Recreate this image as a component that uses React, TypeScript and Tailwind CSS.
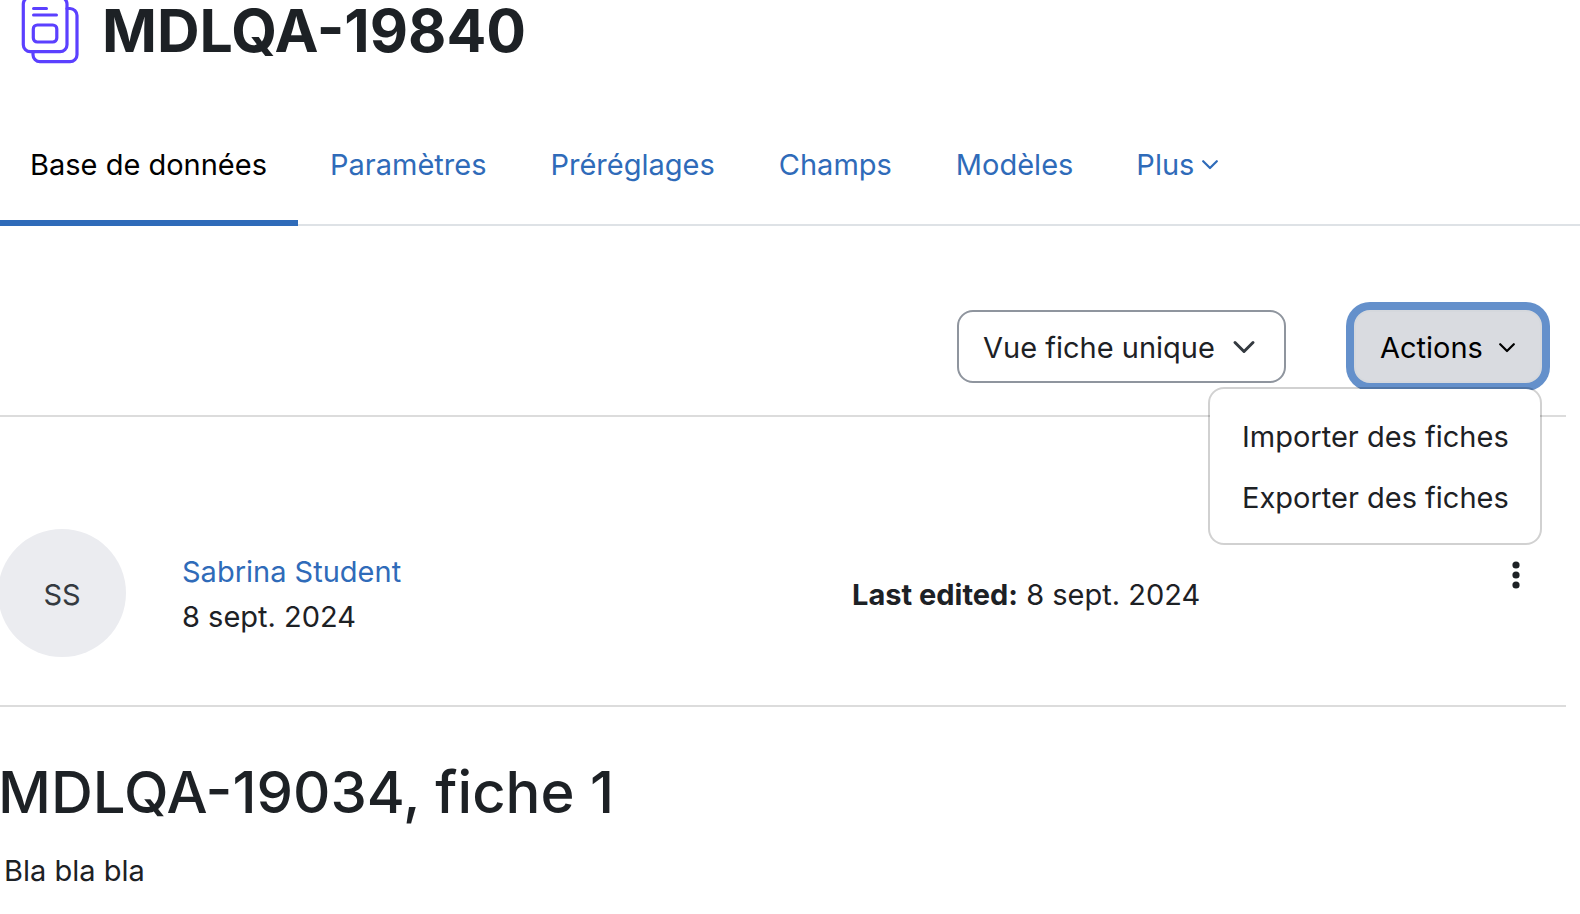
import React from 'react';

const tabs = ['Paramètres', 'Préréglages', 'Champs', 'Modèles'];

const menuItems = ['Importer des fiches', 'Exporter des fiches'];

const DatabaseIcon: React.FC = () => (
  <svg className="h-16 w-15 shrink-0" viewBox="0 0 60 64" fill="none" stroke="#5b40ff" strokeWidth="3.2" strokeLinecap="round" aria-hidden="true">
    <rect x="3.3" y="-3" width="43.7" height="54.7" rx="7" />
    <path d="M47 8.5h3a7 7 0 0 1 7 7v39.2a7 7 0 0 1-7 7H20a7 7 0 0 1-7-7v-3" />
    <path d="M13.5 8.5h13M13.5 15h23" strokeWidth="3" />
    <rect x="13.3" y="25" width="23.5" height="17" rx="4" />
  </svg>
);

const SmallChevron: React.FC = () => (
  <svg className="h-4 w-4 shrink-0" viewBox="0 0 16 16" fill="none" stroke="currentColor" strokeWidth="2.2" strokeLinecap="round" strokeLinejoin="round" aria-hidden="true">
    <path d="M1.2 4.2 8 11l6.8-6.8" />
  </svg>
);

const TabBar: React.FC = () => (
  <nav className="flex text-[29px] leading-[45px] text-[#2f6bb9] shadow-[inset_0_-2px_0_#dee2e6]">
    <a href="#base" aria-current="page" className="border-b-6 border-[#2f6bb9] pt-10 pr-[31px] pb-[33px] pl-[30px] text-black">
      Base de données
    </a>
    {tabs.map((tab) => (
      <a key={tab} href={`#${tab}`} className="px-8 pt-10 pb-[33px]">
        {tab}
      </a>
    ))}
    <button type="button" className="flex items-center gap-2 px-[31px] pt-10 pb-[39px]">
      Plus
      <SmallChevron />
    </button>
  </nav>
);

const Toolbar: React.FC = () => (
  <div className="flex justify-end gap-[68px] pr-6 pb-8 text-[29px] leading-[45px]">
    <div className="relative">
      <select
        aria-label="Mode d'affichage"
        className="h-[73px] w-[329px] appearance-none rounded-2xl border-2 border-[#8f959e] bg-white pt-0.5 pl-6 text-[#1d2125]"
      >
        <option>Vue fiche unique</option>
      </select>
      <svg className="pointer-events-none absolute top-6 right-[30px] h-6 w-6" viewBox="0 0 24 24" fill="none" stroke="#343a40" strokeWidth="3" strokeLinecap="round" strokeLinejoin="round" aria-hidden="true">
        <path d="m3 8.5 9 9 9-9" />
      </svg>
    </div>

    <div className="relative">
      <button
        type="button"
        aria-haspopup="menu"
        aria-expanded="true"
        className="flex h-[73px] w-[188px] items-center justify-between rounded-2xl border-2 border-[#d5d8dd] bg-[#d9dbe0] pt-0.5 pr-[25px] pl-6 text-black ring-8 ring-[#6490cb]"
      >
        Actions
        <SmallChevron />
      </button>
      <div role="menu" className="absolute top-full right-0 z-10 mt-1 w-[334px] rounded-2xl border-2 border-black/18 bg-white bg-clip-padding pt-[17px] pb-[15px]">
        {menuItems.map((item) => (
          <a key={item} href="#fiches" role="menuitem" className="block px-8 py-2 whitespace-nowrap text-[#1d2125]">
            {item}
          </a>
        ))}
      </div>
    </div>
  </div>
);

const EntryHeader: React.FC = () => (
  <div className="flex items-center pt-28 pr-6 pb-12 text-[29px] leading-[45px]">
    <div className="flex w-[55%] items-center gap-14">
      <div className="-ml-0.5 flex h-32 w-32 shrink-0 items-center justify-center rounded-full bg-[#ebecf0] pt-0.5 text-[#343a40]">
        SS
      </div>
      <div className="pt-0.5">
        <a href="#profil" className="block text-[#2f6bb9]">Sabrina Student</a>
        <p>8 sept. 2024</p>
      </div>
    </div>
    <p className="flex-1 pt-0.5 pl-1">
      <strong className="font-bold">Last edited:</strong> 8 sept. 2024
    </p>
    <button type="button" aria-label="Menu d'actions" className="flex w-13 justify-center self-start pt-7">
      <svg className="h-9 w-4" viewBox="0 0 16 36" fill="#1d2125" aria-hidden="true">
        <circle cx="8" cy="8" r="3.6" />
        <circle cx="8" cy="18" r="3.6" />
        <circle cx="8" cy="28" r="3.6" />
      </svg>
    </button>
  </div>
);

export default function App() {
  return (
    <div className="min-h-screen bg-white font-['Inter',sans-serif] text-[#1d2125]">
      <header className="flex items-start gap-[22px] pb-[38px] pl-5">
        <DatabaseIcon />
        <h1 className="text-[59px] leading-[62px] font-bold">MDLQA-19840</h1>
      </header>

      <TabBar />

      <main className="pt-[84px]">
        <div className="mr-3.5 border-b-2 border-[#dcdcdc]">
          <Toolbar />
        </div>
        <section className="mr-3.5 border-b-2 border-[#dcdcdc]">
          <EntryHeader />
        </section>
        <section className="pt-[49px]">
          <h2 className="-ml-0.5 text-[58px] leading-[72px] font-medium">MDLQA-19034, fiche 1</h2>
          <p className="mt-5 pl-1 text-[29px] leading-[45px]">Bla bla bla</p>
        </section>
      </main>
    </div>
  );
}
